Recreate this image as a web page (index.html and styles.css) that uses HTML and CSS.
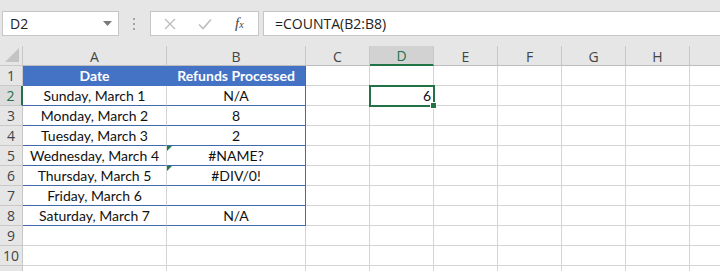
FILE: index.html
```html
<!DOCTYPE html>
<html lang="en">
<head>
    <meta charset="UTF-8">
    <title>COUNTA example</title>
    <link rel="stylesheet" href="styles.css">
</head>
<body>
    <div class="formula-bar">
        <div class="name-box">
            <span>D2</span>
            <svg class="drop" width="9" height="5" viewBox="0 0 9 5"><path d="M0 0h9L4.5 5z" fill="#7a7a7a"/></svg>
        </div>
        <div class="grip"><i></i><i></i><i></i></div>
        <div class="fx-box">
            <svg width="12" height="12" viewBox="0 0 12 12"><path d="M1 1l10 10M11 1L1 11" stroke="#bdbdbd" stroke-width="1.4"/></svg>
            <svg width="14" height="12" viewBox="0 0 14 12"><path d="M1 6.5l4 4L13 1.5" stroke="#bdbdbd" stroke-width="1.6" fill="none"/></svg>
            <span class="fx">f<small>x</small></span>
        </div>
        <div class="formula">=COUNTA(B2:B8)</div>
    </div>

    <div class="sheet">
        <div class="corner"><svg width="14" height="14" viewBox="0 0 14 14"><path d="M14 0v14H0z" fill="#c4c4c4"/></svg></div>
        <div class="col-head">A</div>
        <div class="col-head">B</div>
        <div class="col-head">C</div>
        <div class="col-head active">D</div>
        <div class="col-head">E</div>
        <div class="col-head">F</div>
        <div class="col-head">G</div>
        <div class="col-head">H</div>
        <div class="col-head"></div>

        <div class="row-head">1</div>
        <div class="cell title">Date</div>
        <div class="cell title last">Refunds Processed</div>
        <div class="cell"></div><div class="cell"></div><div class="cell"></div><div class="cell"></div><div class="cell"></div><div class="cell"></div><div class="cell"></div>

        <div class="row-head active">2</div>
        <div class="cell data">Sunday, March 1</div>
        <div class="cell data last">N/A</div>
        <div class="cell"></div><div class="cell selected">6</div><div class="cell"></div><div class="cell"></div><div class="cell"></div><div class="cell"></div><div class="cell"></div>

        <div class="row-head">3</div>
        <div class="cell data">Monday, March 2</div>
        <div class="cell data last">8</div>
        <div class="cell"></div><div class="cell"></div><div class="cell"></div><div class="cell"></div><div class="cell"></div><div class="cell"></div><div class="cell"></div>

        <div class="row-head">4</div>
        <div class="cell data">Tuesday, March 3</div>
        <div class="cell data last">2</div>
        <div class="cell"></div><div class="cell"></div><div class="cell"></div><div class="cell"></div><div class="cell"></div><div class="cell"></div><div class="cell"></div>

        <div class="row-head">5</div>
        <div class="cell data">Wednesday, March 4</div>
        <div class="cell data last flag">#NAME?</div>
        <div class="cell"></div><div class="cell"></div><div class="cell"></div><div class="cell"></div><div class="cell"></div><div class="cell"></div><div class="cell"></div>

        <div class="row-head">6</div>
        <div class="cell data">Thursday, March 5</div>
        <div class="cell data last flag">#DIV/0!</div>
        <div class="cell"></div><div class="cell"></div><div class="cell"></div><div class="cell"></div><div class="cell"></div><div class="cell"></div><div class="cell"></div>

        <div class="row-head">7</div>
        <div class="cell data">Friday, March 6</div>
        <div class="cell data last"></div>
        <div class="cell"></div><div class="cell"></div><div class="cell"></div><div class="cell"></div><div class="cell"></div><div class="cell"></div><div class="cell"></div>

        <div class="row-head">8</div>
        <div class="cell data">Saturday, March 7</div>
        <div class="cell data last">N/A</div>
        <div class="cell"></div><div class="cell"></div><div class="cell"></div><div class="cell"></div><div class="cell"></div><div class="cell"></div><div class="cell"></div>

        <div class="row-head">9</div>
        <div class="cell"></div><div class="cell"></div><div class="cell"></div><div class="cell"></div><div class="cell"></div><div class="cell"></div><div class="cell"></div><div class="cell"></div><div class="cell"></div>

        <div class="row-head">10</div>
        <div class="cell"></div><div class="cell"></div><div class="cell"></div><div class="cell"></div><div class="cell"></div><div class="cell"></div><div class="cell"></div><div class="cell"></div><div class="cell"></div>

        <div class="row-head"></div>
        <div class="cell"></div><div class="cell"></div><div class="cell"></div><div class="cell"></div><div class="cell"></div><div class="cell"></div><div class="cell"></div><div class="cell"></div><div class="cell"></div>
    </div>
</body>
</html>
```

FILE: styles.css
```css
* {
    box-sizing: border-box;
}

body {
    margin: 0;
    width: 720px;
    height: 271px;
    overflow: hidden;
    background: #ffffff;
    font-family: "Open Sans", "Noto Sans", sans-serif;
}

/* formula bar */
.formula-bar {
    display: flex;
    align-items: center;
    height: 46px;
    padding: 11px 0 10px 2px;
    background: #e6e6e6;
}

.name-box {
    display: flex;
    align-items: center;
    justify-content: space-between;
    width: 117px;
    height: 25px;
    padding: 0 6px 0 7px;
    background: #fff;
    border: 1px solid #c6c6c6;
    font-size: 14px;
    color: #222;
}

.grip {
    display: flex;
    flex-direction: column;
    gap: 3px;
    margin: 0 15px 0 14px;
}

.grip i {
    width: 2px;
    height: 2px;
    background: #a6a6a6;
}

.fx-box {
    display: flex;
    align-items: center;
    gap: 22px;
    width: 109px;
    height: 25px;
    padding-left: 13px;
    background: #fff;
    border: 1px solid #c6c6c6;
}

.fx {
    font-family: "Liberation Serif", serif;
    font-style: italic;
    font-size: 15px;
    color: #444;
    margin-left: 1px;
}

.fx small {
    font-size: 10px;
}

.formula {
    flex: 1;
    height: 25px;
    margin-left: 4px;
    padding: 2px 0 0 11px;
    background: #fff;
    border: 1px solid #c6c6c6;
    border-right: none;
    font-size: 14px;
    color: #222;
}

/* grid */
.sheet {
    display: grid;
    grid-template-columns: 23px 144px 139px 64px 64px 64px 64px 64px 64px 64px;
    grid-auto-rows: 20px;
    height: 225px;
    overflow: hidden;
}

.corner,
.col-head,
.row-head {
    background: #e6e6e6;
    color: #444;
    font-size: 14px;
    display: flex;
    align-items: center;
    justify-content: center;
}

.corner {
    border-right: 1px solid #c8c8c8;
    border-bottom: 1px solid #c8c8c8;
    justify-content: flex-end;
    align-items: flex-end;
    padding: 0 3px 3px 0;
}

.col-head {
    border-right: 1px solid #c8c8c8;
    border-bottom: 1px solid #bdbdbd;
    padding-top: 1px;
}

.col-head.active {
    background: #d2d2d2;
    color: #217346;
    border-bottom: 2px solid #217346;
}

.row-head {
    border-right: 1px solid #c8c8c8;
    border-bottom: 1px solid #c8c8c8;
}

.row-head.active {
    background: #dcdcdc;
    color: #217346;
    border-right: 2px solid #217346;
}

.cell {
    position: relative;
    border-right: 1px solid #d4d4d4;
    border-bottom: 1px solid #d4d4d4;
    font-family: Lato, "Open Sans", sans-serif;
    font-size: 14px;
    color: #111;
    display: flex;
    align-items: center;
    justify-content: center;
    white-space: nowrap;
}

.cell.title {
    background: #4472c4;
    color: #fff;
    font-weight: bold;
    border-right-color: #4472c4;
    border-bottom-color: #4472c4;
}

.cell.data {
    border-bottom-color: #4169ad;
}

.cell.last {
    border-right-color: #4169ad;
}

.cell.flag::before {
    content: "";
    position: absolute;
    top: 0;
    left: 0;
    border-top: 5px solid #1e7b45;
    border-right: 5px solid transparent;
}

.cell.selected {
    justify-content: flex-end;
    padding-right: 2px;
    outline: 2px solid #217346;
    outline-offset: -1px;
    z-index: 1;
}

.cell.selected::after {
    content: "";
    position: absolute;
    right: -4px;
    bottom: -4px;
    width: 5px;
    height: 5px;
    background: #217346;
    border: 1px solid #fff;
}
```
